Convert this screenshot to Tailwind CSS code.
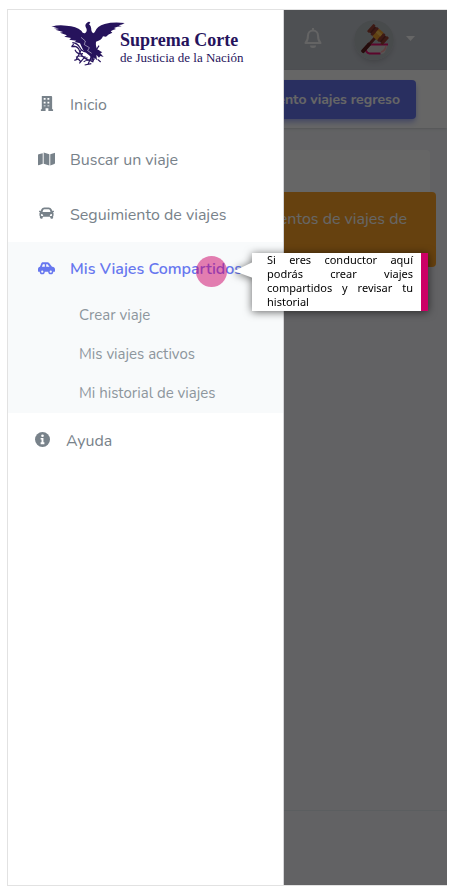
<!DOCTYPE html>
<html lang="es">
<head>
<meta charset="utf-8">
<meta name="viewport" content="width=device-width, initial-scale=1">
<title>Viajes compartidos</title>
<script src="https://cdn.jsdelivr.net/npm/@tailwindcss/browser@4"></script>
</head>
<body class="min-h-screen bg-white pt-[9px] pr-[7px] pb-[7px] pl-[7px] font-['Nunito','Noto_Sans',sans-serif] flex">
<div class="relative grid flex-1 grid-cols-1 overflow-hidden border-t border-l border-b border-[#e2e2e2]">

  <!-- Page content -->
  <main class="col-start-1 row-start-1 flex min-w-0 flex-col bg-[#f4f6f9]">
    <header class="flex h-[60px] items-center justify-end bg-[#c4c8d0] pr-8">
      <button aria-label="Notificaciones" class="mr-8 mb-1 text-white/90">
        <svg class="h-[22px] w-[18px]" viewBox="0 0 18 22" fill="none" stroke="currentColor" stroke-width="2"><path d="M9 1v2M1.500 16c2-2 2.500-4 2.500-7.500a5 5 0 0 1 10 0c0 3.500.5 5.500 2.500 7.500z" stroke-linejoin="round"/><path d="M6 18.500h6a3 2.500 0 0 1-6 0z" fill="currentColor" stroke="none"/></svg>
      </button>
      <button aria-label="Cuenta" class="flex items-center gap-3">
        <svg class="size-10 rounded-full shadow-md" viewBox="0 0 40 40"><circle cx="20" cy="20" r="20" fill="#b5bbbf"/>
          <path d="M12 24h22l-3 8q-1 2-4 2H15q-4-2-3-10z" fill="#d9d3d3"/>
          <path d="M15 24.500h19M11.500 27q0 6 4 6.500h11" fill="none" stroke="#e5106f" stroke-width="2"/>
          <path d="M27 32q4-1 5-6" fill="none" stroke="#f0a0a0" stroke-width="1.500"/>
          <g transform="translate(24 14.500) rotate(42)">
            <rect x="-1.500" y="4" width="3" height="10" fill="#7c2f28"/><rect x="-2" y="12" width="4" height="12" rx="1.500" fill="#5c1f1e"/>
            <rect x="-8" y="-4" width="16" height="8" fill="#74302c"/>
            <rect x="-10.500" y="-5" width="3" height="10" rx="1" fill="#9a4334"/><rect x="7.500" y="-5" width="3" height="10" rx="1" fill="#9a4334"/>
            <rect x="-6" y="-5" width="3" height="10" rx="1" fill="#9a4334"/><rect x="3" y="-5" width="3" height="10" rx="1" fill="#9a4334"/>
            <rect x="-3" y="-5" width="6" height="10" fill="#efa12f"/><rect x="-3" y="-3" width="6" height="3" fill="#ffc54f"/>
          </g>
        </svg>
        <svg class="mb-1 h-[5px] w-[9px] text-white" viewBox="0 0 9 5" fill="currentColor"><path d="M0 0h9L4.500 5z"/></svg>
      </button>
    </header>
    <div class="flex h-[58px] items-center justify-end bg-white pr-[31px] shadow-sm">
      <button class="h-[39px] rounded bg-[#6777ef] px-4 text-[14px] font-bold whitespace-nowrap text-white shadow-md shadow-[#acb5f6]">Seguimiento viajes regreso</button>
    </div>
    <section class="mt-[22px] mr-[17px] ml-4 flex-1">
      <div class="rounded bg-white pt-[42px] pb-4">
        <p class="-mr-[6px] flex h-[75px] justify-end rounded bg-[#ffa426] pt-[15px] pr-[29px] text-[16px] whitespace-nowrap text-white">Seguimientos de viajes de</p>
      </div>
    </section>
    <footer class="h-[75px] border-t border-[#e3eaef]"></footer>
  </main>
  <div class="z-10 col-start-1 row-start-1 bg-black/60"></div>

  <!-- Side menu -->
  <aside class="z-20 col-start-1 row-start-1 w-[276px] border-r border-[#d5d5d8] bg-white text-[16px] text-[#78828a]">
    <a href="#" aria-label="Suprema Corte de Justicia de la Nación" class="flex h-[67px] items-start pt-[10px] pl-[43px] text-[#26135c]">
      <svg class="h-[48px] w-[75px] shrink-0" viewBox="36 30 225 144" fill="currentColor">
        <path d="M37 50Q59 43 82 47Q112 48 127 62Q132 72 139 69Q147 62 140 51Q137 43 144 38Q151 32 154 38L150 43Q157 48 157 61Q160 74 167 67Q174 47 197 42Q222 35 257 39Q250 45 239 46L248 49Q235 50 225 54L231 57Q221 59 215 64L220 68Q207 72 201 80L192 79Q187 92 171 95Q169 110 176 119L190 127L184 130L194 141L184 138L180 143L172 134L174 151L165 142L160 153L153 138L143 130L132 119L123 100L107 96L112 92L91 89L96 84L76 80L84 76L63 68L72 66L49 59L60 57L44 54L53 52Z"/>
        <path d="M100 98q16 2 22 14t19 14M97 110q20-5 25 14t24 20M108 119q6 15 24 12M111 142q15-9 26 2t30 3M134 155q14-9 28 1M121 160l18-21M127 119l-15 29M158 138l-11 25M171 128l-10 29M180 120l-12 18M104 102l-5 6 10 2M180 107l-10 16M106 151l12-4 8 9M137 165l20-4M176 148l9 8" fill="none" stroke="currentColor" stroke-width="3.500"/>
        <path d="m126 82 13 11-3 11 15 9-5 9 12 8" fill="none" stroke="#fff" stroke-width="1.500"/>
      </svg>
      <span class="-ml-[6px] pt-[10px] font-['Liberation_Serif',serif] whitespace-nowrap">
        <strong class="block text-[18px] leading-[20px]">Suprema Corte</strong>
        <span class="block text-[13px] leading-[16px]">de Justicia de la Nación</span>
      </span>
    </a>
    <nav>
      <a href="#" class="flex h-[55px] items-center gap-[15px] pl-[30px]"><svg class="mb-0.5 h-[15px] w-[17px]" viewBox="0 0 18 16" fill="currentColor"><path fill-rule="evenodd" d="M4 0h10q1 0 1 1v13h1v2h-5v-3H8v3H3v-2h1V1q0-1 0-1zm2 2v2h2V2zm4 0v2h2V2zM6 6v2h2V6zm4 0v2h2V6zm-4 4v1h2v-1zm4 0v1h2v-1z"/></svg>Inicio</a>
      <a href="#" class="flex h-[55px] items-center gap-[15px] pl-[30px]"><svg class="mb-0.5 h-4 w-[17px]" viewBox="0 0 576 512" fill="currentColor"><path d="M0 117v332c0 11 11 19 22 15l138-48V64L20 96C8 101 0 108 0 117zm192 299 192 64V96L192 32zM554 49 416 96v384l140-56c12-5 20-16 20-30V64c0-11-11-19-22-15z"/></svg>Buscar un viaje</a>
      <a href="#" class="flex h-[55px] items-center gap-[15px] pl-[30px]"><svg class="mb-0.5 h-4 w-[17px]" viewBox="0 0 576 512" fill="currentColor"><path fill-rule="evenodd" d="M532 144h-53l-18-45c-16-40-54-67-98-67H213c-44 0-82 27-98 67l-18 45H44c-8 0-14 7-12 15l6 24c1 5 6 9 12 9h20c-13 12-22 29-22 48v48c0 16 6 31 16 42v54c0 18 14 32 32 32h32c18 0 32-14 32-32v-32h256v32c0 18 14 32 32 32h32c18 0 32-14 32-32v-54c10-11 16-26 16-42v-48c0-19-8-36-22-48h20c6 0 11-4 12-9l6-24c2-8-4-15-12-15zm-357-21c6-17 21-27 38-27h150c17 0 32 10 38 27l20 49c0 12-7 20-18 20H173c-11 0-18-8-18-20zm-47 197c-19 0-32-13-32-32s13-32 32-32 48 29 48 48-29 16-48 16zm320 0c-19 0-48 3-48-16s29-48 48-48 32 13 32 32-13 32-32 32z"/></svg>Seguimiento de viajes</a>
      <div class="bg-[#f8fafb]">
        <a href="#" class="flex h-[54px] items-center gap-[15px] pl-[30px] font-semibold whitespace-nowrap text-[#6777ef]"><svg class="mb-0.5 h-[15px] w-[17px] shrink-0" viewBox="0 0 640 500" fill="currentColor"><path fill-rule="evenodd" d="M544 180h-16L419 43C404 25 382 14 358 14H184c-26 0-50 16-59 40L74 181C31 188 0 225 0 270v82c0 9 7 16 16 16h48a96 96 0 0 0 192 0h128a96 96 0 0 0 192 0h48c9 0 16-7 16-16v-76c0-53-43-96-96-96zM147 180l37-94h72v94zm161 0V86h50l75 94zM160 410a42 42 0 1 1 0-84 42 42 0 0 1 0 84zm320 0a42 42 0 1 1 0-84 42 42 0 0 1 0 84z"/></svg>Mis Viajes Compartidos</a>
        <ul class="text-[15px] text-[#8d969d]">
          <li><a href="#" class="flex h-[39px] items-center pl-[71px]">Crear viaje</a></li>
          <li><a href="#" class="flex h-[39px] items-center pl-[71px]">Mis viajes activos</a></li>
          <li><a href="#" class="flex h-[39px] items-center pl-[71px]">Mi historial de viajes</a></li>
        </ul>
      </div>
      <a href="#" class="flex h-[55px] items-center gap-4 pl-[27px]"><svg class="mb-0.5 size-[15px]" viewBox="0 0 16 16"><circle cx="8" cy="8" r="8" fill="currentColor"/><path d="M6 6.500h3V11h1v2H6v-2h1V8H6z" fill="#fff"/><circle cx="8" cy="4" r="1.400" fill="#fff"/></svg>Ayuda</a>
    </nav>
  </aside>

  <!-- Guided tour marker and tooltip -->
  <span class="absolute top-[246px] left-[188px] z-30 size-[31px] rounded-full bg-[#cc0066]/50"></span>
  <div role="tooltip" class="absolute top-[243px] left-[244px] z-30 w-[176px] drop-shadow-[0_1px_4px_rgba(0,0,0,0.6)]">
    <svg class="absolute top-[9px] -left-[18px] h-4 w-[19px]" viewBox="0 0 19 16" fill="#fff"><path d="M19 0v16L0 9z"/></svg>
    <p class="relative border-r-[7px] border-[#cc0066] bg-white pr-2 pb-0.5 pl-[15px] text-justify font-['Noto_Sans',sans-serif] text-[11px] leading-[14px] text-black">Si eres conductor aquí podrás crear viajes compartidos y revisar tu historial</p>
  </div>
</div>
</body>
</html>
